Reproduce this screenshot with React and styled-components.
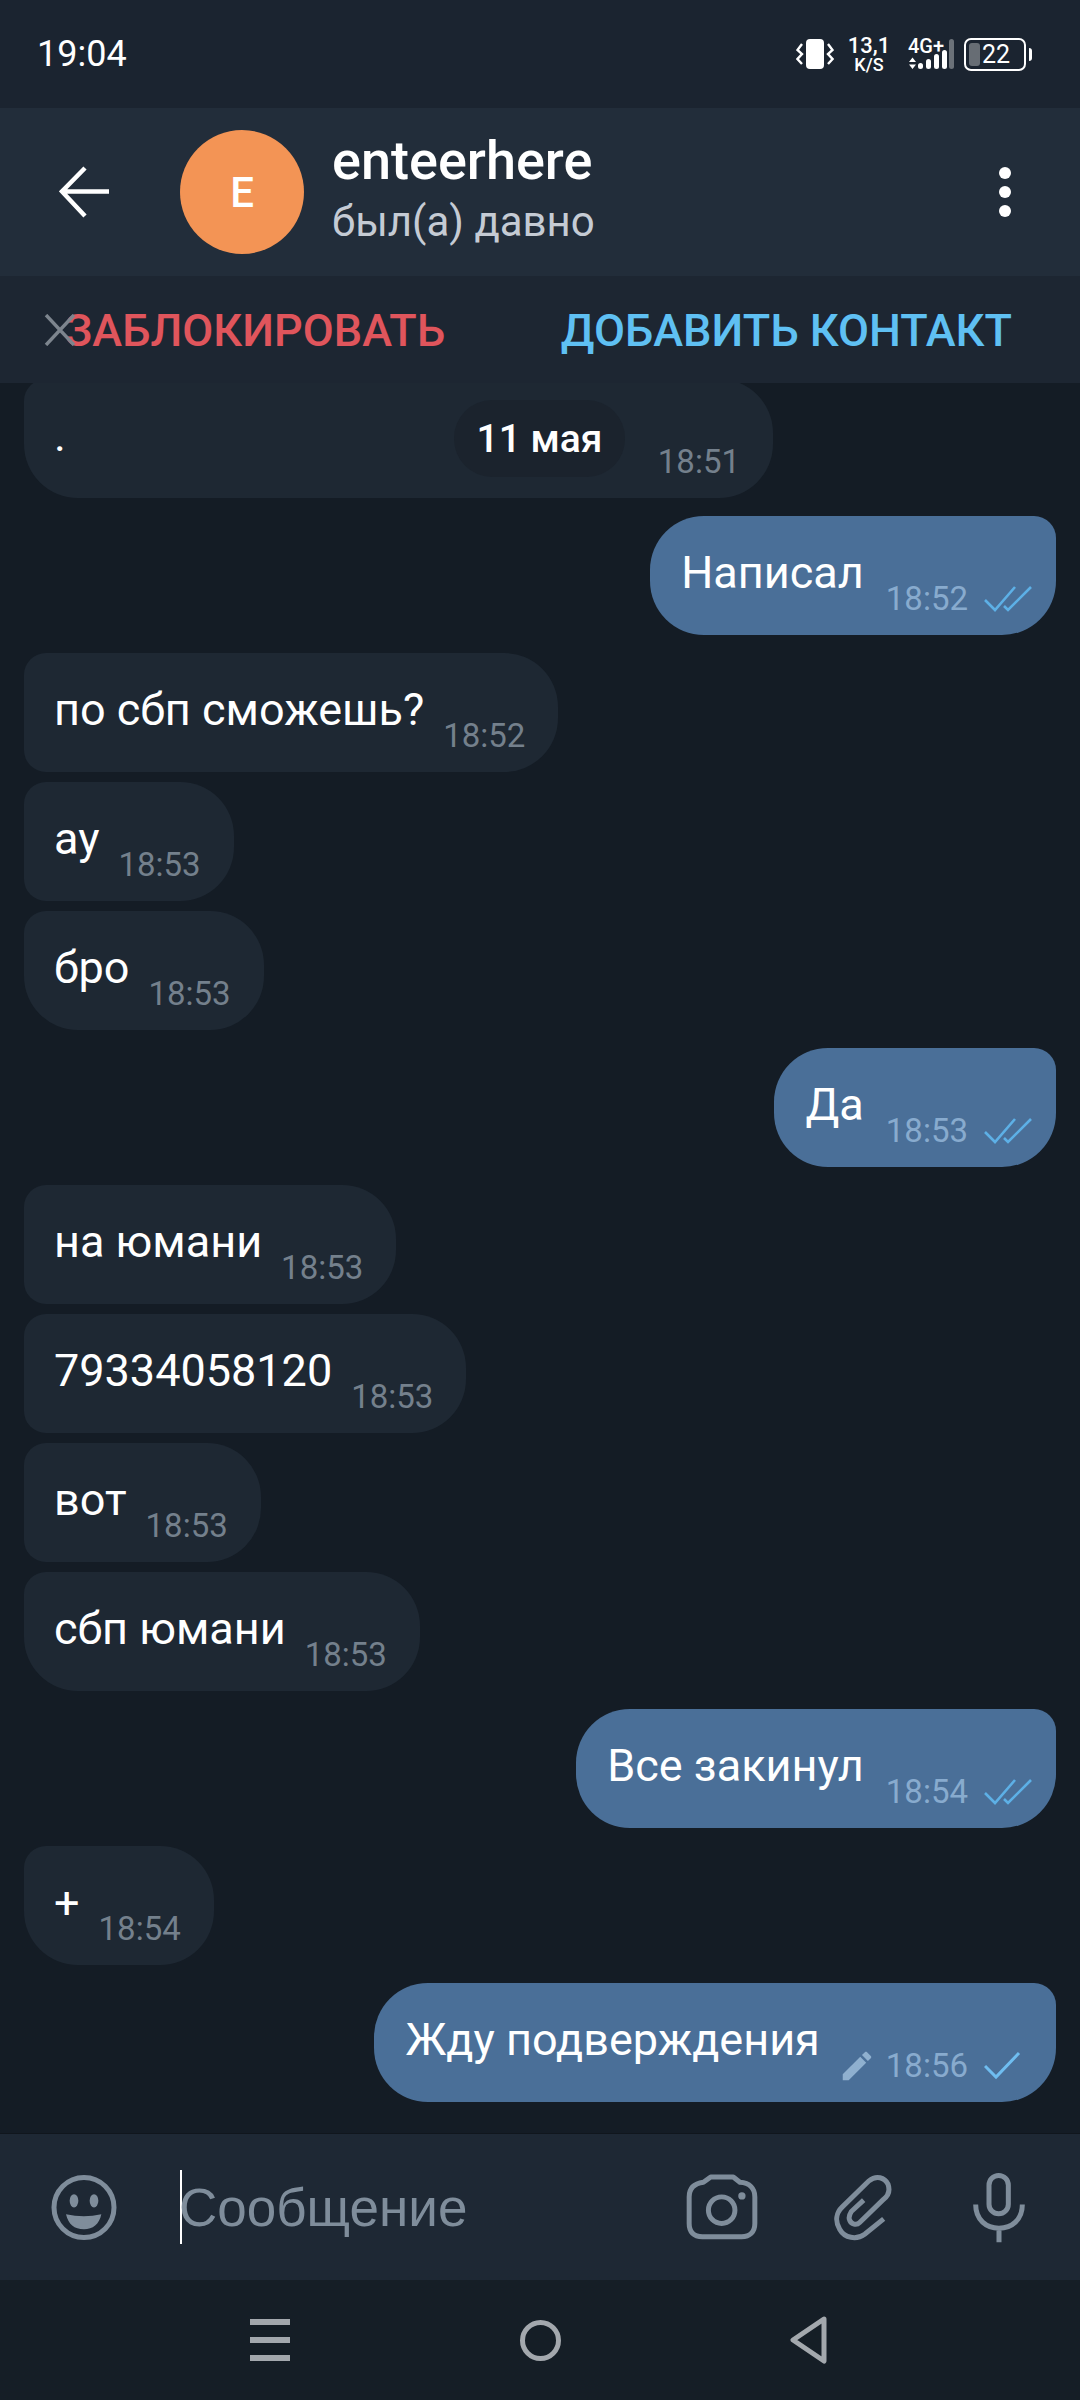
import React from 'react';
import styled, { createGlobalStyle } from 'styled-components';

const GlobalStyle = createGlobalStyle`
  html, body { margin: 0; padding: 0; background: #141c25; }
  * { box-sizing: border-box; }
`;

const messages = [
  { id: 1, text: '.', time: '18:51', last: true, width: 749 },
  { id: 2, text: 'Написал', time: '18:52', out: true, ticks: 2, gap: 18 },
  { id: 3, text: 'по сбп сможешь?', time: '18:52', gap: 18 },
  { id: 4, text: 'ау', time: '18:53', gap: 10 },
  { id: 5, text: 'бро', time: '18:53', gap: 10, last: true },
  { id: 6, text: 'Да', time: '18:53', out: true, ticks: 2, gap: 18 },
  { id: 7, text: 'на юмани', time: '18:53', gap: 18 },
  { id: 8, text: '79334058120', time: '18:53', gap: 10 },
  { id: 9, text: 'вот', time: '18:53', gap: 10 },
  { id: 10, text: 'сбп юмани', time: '18:53', gap: 10, last: true },
  { id: 11, text: 'Все закинул', time: '18:54', out: true, ticks: 2, gap: 18 },
  { id: 12, text: '+', time: '18:54', gap: 18, last: true },
  { id: 13, text: 'Жду подверждения', time: '18:56', out: true, ticks: 1, edited: true, gap: 18 },
];

const App = () => (
  <Screen>
    <GlobalStyle />
    <StatusBar>
      <Clock>19:04</Clock>
      <StatusIcons>
        <VibrateIcon />
        <Speed>
          <SpeedValue>13,1</SpeedValue>
          <SpeedUnit>K/S</SpeedUnit>
        </Speed>
        <Network>
          <NetworkLabel>4G+</NetworkLabel>
          <SignalIcon />
        </Network>
        <Battery>
          <BatteryBody>
            <BatteryLevel />
            <BatteryText>22</BatteryText>
          </BatteryBody>
          <BatteryTip />
        </Battery>
      </StatusIcons>
    </StatusBar>

    <Header>
      <BackButton>
        <svg width="50" height="52" viewBox="0 0 50 52" fill="none" stroke="#fff" strokeWidth="4.500">
          <path d="M50 25.500H4M26 2 3 25.500 26 50" />
        </svg>
      </BackButton>
      <Avatar>E</Avatar>
      <Peer>
        <PeerName>enteerhere</PeerName>
        <PeerStatus>был(а) давно</PeerStatus>
      </Peer>
      <MoreButton>
        <Dot />
        <Dot />
        <Dot />
      </MoreButton>
    </Header>

    <ActionBar>
      <CloseIcon viewBox="0 0 32 32" fill="none" stroke="#7d858e" strokeWidth="3.400">
        <path d="M2 1l28 30M30 1 2 31" />
      </CloseIcon>
      <ActionLink color="#e0555c">ЗАБЛОКИРОВАТЬ</ActionLink>
      <ActionLink color="#5fc0f3">ДОБАВИТЬ КОНТАКТ</ActionLink>
    </ActionBar>

    <ChatArea>
      <DatePill>11 мая</DatePill>
      <MessageList>
        {messages.map((m) => (
          <Bubble key={m.id} $out={m.out} $last={m.last} $gap={m.gap} $width={m.width}>
            <MessageText>{m.text}</MessageText>
            <Meta $out={m.out}>
              {m.edited && <PencilIcon />}
              <Time $out={m.out}>{m.time}</Time>
              {m.ticks === 2 && <DoubleTick />}
              {m.ticks === 1 && <SingleTick />}
            </Meta>
          </Bubble>
        ))}
      </MessageList>
    </ChatArea>

    <InputBar>
      <EmojiIcon />
      <Caret />
      <Placeholder>Сообщение</Placeholder>
      <CameraIcon />
      <ClipIcon />
      <MicIcon />
    </InputBar>

    <NavBar>
      <MenuGlyph>
        <i />
        <i />
        <i />
      </MenuGlyph>
      <HomeGlyph />
      <svg width="38" height="48" viewBox="0 0 38 48" fill="none" stroke="#a3a8ad" strokeWidth="5" strokeLinejoin="round">
        <path d="M34 3 3 24l31 21z" />
      </svg>
    </NavBar>
  </Screen>
);

export default App;

const VibrateIcon = () => (
  <svg width="38" height="30" viewBox="0 0 38 30" fill="none" style={{ marginRight: 18 }}>
    <rect x="10" y="0" width="18" height="30" rx="4" fill="#fff" />
    <path d="M6 5 1.500 11 6 15 1.500 20 6 25M32 5l4.500 6-4.500 4 4.500 5-4.500 5" stroke="#fff" strokeWidth="2.400" />
  </svg>
);

const SignalIcon = () => (
  <svg width="48" height="30" viewBox="0 0 48 30" fill="#fff">
    <path d="M4.500 18.500 8 23H1zM4.500 30 1 25.500h7z" />
    <rect x="10" y="24" width="5" height="6" rx="2.500" />
    <rect x="18" y="20" width="5" height="10" rx="2.500" />
    <rect x="26" y="15" width="5" height="15" rx="2.500" />
    <rect x="34" y="11" width="5" height="19" rx="2.500" />
    <rect x="41" y="0" width="5" height="30" rx="2.500" fill="#6b7178" />
  </svg>
);

const PencilIcon = () => (
  <svg width="38" height="38" viewBox="0 0 24 24" fill="#8fb0cf" style={{ marginRight: 10, marginLeft: -4 }}>
    <path d="M3 17.250V21h3.750L17.810 9.940l-3.750-3.750L3 17.250zM20.710 7.040c.39-.39.39-1.020 0-1.410l-2.340-2.340c-.39-.39-1.020-.39-1.410 0l-1.830 1.830 3.750 3.750 1.830-1.830z" />
  </svg>
);

const DoubleTick = () => (
  <svg width="48" height="30" viewBox="0 0 48 30" fill="none" stroke="#5db0e6" strokeWidth="2.600" style={{ marginLeft: 16 }}>
    <path d="M1 16l10 10L31 3M20 22l4 4L47 3" />
  </svg>
);

const SingleTick = () => (
  <svg width="48" height="30" viewBox="0 0 48 30" fill="none" stroke="#6fbdf0" strokeWidth="3" style={{ marginLeft: 16 }}>
    <path d="M1 15l11 11L35 2" />
  </svg>
);

const EmojiIcon = () => (
  <svg width="66" height="67" viewBox="60 40 198 200" fill="#7f8d9b" style={{ marginLeft: 51 }}>
    <circle cx="159" cy="140" r="90" fill="none" stroke="#7f8d9b" strokeWidth="15" />
    <ellipse cx="129" cy="120" rx="13" ry="20" />
    <ellipse cx="189" cy="120" rx="13" ry="20" />
    <path d="M105 160Q159 172 211 160C205 190 185 205 159 205 130 205 112 190 105 160z" />
  </svg>
);

const CameraIcon = () => (
  <svg width="74" height="68" viewBox="75 38 222 205" fill="none" stroke="#7f8d9b" strokeWidth="15" style={{ marginRight: 74 }}>
    <path d="M152 50H220L240 66C270 68 285 85 285 110V190C285 215 270 230 245 230H127C100 230 87 215 87 190V110C87 85 100 70 130 66Z" strokeLinejoin="round" />
    <circle cx="185" cy="150" r="40" />
    <circle cx="246" cy="107" r="11" fill="#7f8d9b" stroke="none" />
  </svg>
);

const ClipIcon = () => (
  <svg width="60" height="67" viewBox="520 40 180 200" fill="none" stroke="#7f8d9b" strokeWidth="15" style={{ marginRight: 80 }}>
    <path d="M672 174 615 220C590 238 555 232 540 205 525 180 530 155 548 138L628 60C650 42 675 50 685 70 692 90 685 105 672 115L600 185C590 195 575 190 570 178 565 168 570 160 575 152L612 118" />
  </svg>
);

const MicIcon = () => (
  <svg width="52" height="71" viewBox="940 35 156 212" fill="none" stroke="#7f8d9b" strokeWidth="15" style={{ marginRight: 55 }}>
    <rect x="988" y="45" width="58" height="115" rx="29" />
    <path d="M948 132C948 178 980 203 1018 203S1088 178 1088 132M1018 203V245" />
  </svg>
);

const Screen = styled.div`
  width: 1080px;
  height: 2400px;
  display: flex;
  flex-direction: column;
  overflow: hidden;
  background: #141c25;
  font-family: Roboto, 'Noto Sans', sans-serif;
`;

const StatusBar = styled.div`
  height: 108px;
  flex: none;
  display: flex;
  align-items: center;
  justify-content: space-between;
  padding: 0 48px 0 37px;
  background: #1b2430;
  color: #fff;
`;

const Clock = styled.div`
  font-size: 36px;
`;

const StatusIcons = styled.div`
  display: flex;
  align-items: center;
`;

const Speed = styled.div`
  width: 34px;
  display: flex;
  flex-direction: column;
  align-items: center;
  margin-right: 22px;
  font-weight: 500;
`;

const SpeedValue = styled.span`
  font-size: 22px;
  line-height: 20px;
`;

const SpeedUnit = styled.span`
  font-size: 18px;
  line-height: 17px;
`;

const Network = styled.div`
  position: relative;
  width: 48px;
  height: 30px;
  margin-right: 8px;
  display: flex;
`;

const NetworkLabel = styled.span`
  position: absolute;
  left: 0;
  top: -3px;
  font-size: 20px;
  line-height: 20px;
  font-weight: 500;
`;

const Battery = styled.div`
  display: flex;
  align-items: center;
  gap: 3px;
`;

const BatteryBody = styled.div`
  width: 62px;
  height: 33px;
  border: 2.5px solid #fff;
  border-radius: 7px;
  padding: 3px;
  display: flex;
  align-items: center;
  gap: 2px;
`;

const BatteryLevel = styled.span`
  width: 11px;
  height: 100%;
  background: #676d74;
  border-radius: 3px;
`;

const BatteryText = styled.span`
  font-size: 25px;
  line-height: 25px;
`;

const BatteryTip = styled.span`
  width: 3px;
  height: 13px;
  background: #fff;
  border-radius: 0 3px 3px 0;
`;

const Header = styled.div`
  height: 168px;
  flex: none;
  display: flex;
  align-items: center;
  padding-right: 69px;
  background: #222d3a;
`;

const BackButton = styled.div`
  width: 180px;
  padding-left: 59px;
  display: flex;
  align-items: center;
`;

const Avatar = styled.div`
  width: 124px;
  height: 124px;
  border-radius: 50%;
  background: #f39455;
  color: #fff;
  display: flex;
  align-items: center;
  justify-content: center;
  font-size: 42px;
  font-weight: 500;
`;

const Peer = styled.div`
  flex: 1;
  margin-left: 28px;
  display: flex;
  flex-direction: column;
  margin-top: -2px;
  gap: 1px;
`;

const PeerName = styled.div`
  color: #fff;
  font-size: 54px;
  line-height: 60px;
  font-weight: 500;
`;

const PeerStatus = styled.div`
  color: #c5cbd4;
  font-size: 42px;
  line-height: 60px;
`;

const MoreButton = styled.div`
  display: flex;
  flex-direction: column;
  gap: 7px;
`;

const Dot = styled.span`
  width: 12px;
  height: 12px;
  border-radius: 50%;
  background: #fff;
`;

const ActionBar = styled.div`
  position: relative;
  height: 107px;
  flex: none;
  display: flex;
  align-items: center;
  justify-content: space-between;
  padding: 2px 68px 0 65px;
  background: #1d2632;
  z-index: 2;
`;

const CloseIcon = styled.svg`
  position: absolute;
  left: 44px;
  top: 38px;
  width: 32px;
  height: 32px;
`;

const ActionLink = styled.span`
  color: ${(p) => p.color};
  font-size: 45px;
  font-weight: 500;
`;

const ChatArea = styled.div`
  position: relative;
  flex: 1;
  min-height: 0;
  overflow: hidden;
`;

const DatePill = styled.div`
  position: absolute;
  z-index: 1;
  left: 454px;
  top: 17px;
  width: 171px;
  height: 77px;
  display: flex;
  align-items: center;
  justify-content: center;
  border-radius: 38px;
  background: #1b232d;
  color: #fff;
  font-size: 39px;
  font-weight: 500;
`;

const MessageList = styled.div`
  height: 100%;
  display: flex;
  flex-direction: column;
  justify-content: flex-end;
  padding: 0 24px 31px;
`;

const Bubble = styled.div`
  flex: none;
  height: 119px;
  margin-top: ${(p) => p.$gap || 0}px;
  align-self: ${(p) => (p.$out ? 'flex-end' : 'flex-start')};
  width: ${(p) => (p.$width ? `${p.$width}px` : 'auto')};
  display: flex;
  justify-content: space-between;
  padding: ${(p) => (p.$out ? '33px 24px 0 31px' : '33px 33px 0 30px')};
  background: ${(p) => (p.$out ? '#4a6f98' : '#1e2833')};
  border-radius: ${(p) =>
    p.$out ? '54px 22px 54px 54px' : `22px 54px 54px ${p.$last ? '54px' : '22px'}`};
`;

const MessageText = styled.div`
  color: #fff;
  font-size: 45px;
  line-height: 48px;
  white-space: nowrap;
`;

const Meta = styled.div`
  display: flex;
  align-items: center;
  align-self: flex-start;
  margin-top: 26px;
  margin-left: ${(p) => (p.$out ? '22px' : '19px')};
  height: 48px;
`;

const Time = styled.span`
  font-size: 33px;
  line-height: 48px;
  color: ${(p) => (p.$out ? '#88abce' : '#74808c')};
`;

const InputBar = styled.div`
  height: 147px;
  flex: none;
  display: flex;
  align-items: center;
  background: #1e2834;
  border-top: 1px solid #10161d;
`;

const Caret = styled.span`
  width: 2px;
  height: 74px;
  margin-left: 63px;
  background: #fff;
`;

const Placeholder = styled.div`
  flex: 1;
  margin-left: -3px;
  color: #7f8d9b;
  font-family: 'Liberation Sans', sans-serif;
  font-size: 53px;
`;

const NavBar = styled.div`
  height: 120px;
  flex: none;
  display: flex;
  align-items: center;
  justify-content: space-between;
  padding: 0 252px 0 250px;
  background: #151e26;
`;

const MenuGlyph = styled.div`
  width: 40px;
  display: flex;
  flex-direction: column;
  gap: 12px;

  i {
    display: block;
    height: 6px;
    background: #a3a8ad;
  }
`;

const HomeGlyph = styled.span`
  width: 41px;
  height: 41px;
  border: 5px solid #a3a8ad;
  border-radius: 50%;
`;
